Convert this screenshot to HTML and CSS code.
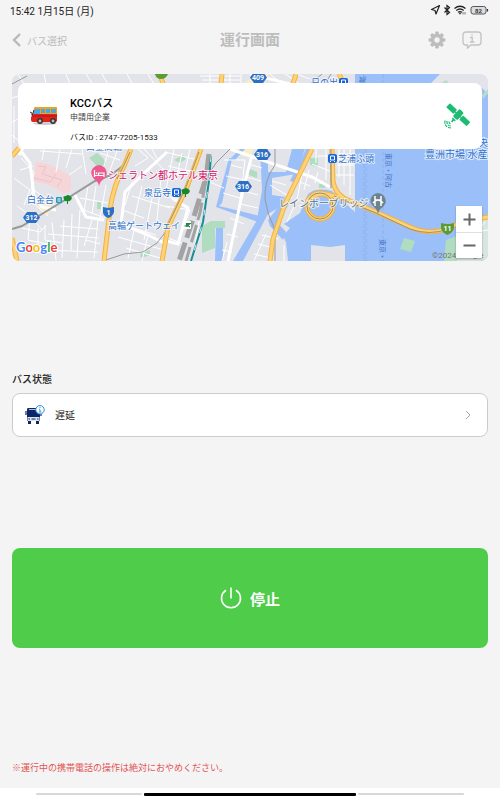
FILE: index.html
```html
<!DOCTYPE html>
<html lang="ja">
<head>
    <meta charset="UTF-8">
    <meta name="viewport" content="width=device-width, initial-scale=1">
    <title>運行画面</title>
    <link rel="stylesheet" href="styles.css">
</head>
<body>
    <div class="status-bar">
        <span>15:42 1月15日 (月)</span>
        <svg class="status-icons" width="60" height="12" viewBox="0 0 60 12">
            <path d="M9.500 1.500L1.500 5.500L5 6.500L6 10Z" fill="none" stroke="#222" stroke-width="1.200" stroke-linejoin="round"/>
            <path d="M14.500 3.500L19.500 8.500L17 10.500V1.500L19.500 3.500L14.500 8.500" fill="none" stroke="#222" stroke-width="1.200"/>
            <path d="M24.500 4.500Q30 0 35.500 4.500M26.300 6.500Q30 3.500 33.700 6.500M28 8.300Q30 6.800 32 8.300" fill="none" stroke="#222" stroke-width="1.300"/>
            <path d="M29 9L30 10.300L31 9ZM33 8V10.500M35 8V10.500" fill="#222" stroke="#444" stroke-width=".7"/>
            <rect x="41" y="2.500" width="15" height="7.500" rx="2.200" fill="#ddd" stroke="#555"/>
            <path d="M57.500 5V7.500" stroke="#333" stroke-width="1.200"/>
            <text x="48.500" y="8.700" class="battery-text">82</text>
        </svg>
    </div>

    <header class="header">
        <a href="#" class="back">
            <svg width="10" height="16" viewBox="0 0 10 16"><path d="M8 2L2 8L8 14" fill="none" stroke="#b9b9b9" stroke-width="2.400"/></svg>
            <span>バス選択</span>
        </a>
        <h1>運行画面</h1>
        <div class="actions">
            <button type="button" aria-label="設定">
                <svg width="18" height="18" viewBox="-9 -9 18 18">
                    <g fill="#bdbdbd">
                        <rect id="tooth" x="-1.800" y="-8.400" width="3.600" height="16.800" rx="1"/>
                        <use href="#tooth" transform="rotate(45)"/>
                        <use href="#tooth" transform="rotate(90)"/>
                        <use href="#tooth" transform="rotate(135)"/>
                        <circle r="6.300"/>
                    </g>
                    <circle r="2.700" fill="#f4f4f4"/>
                </svg>
            </button>
            <button type="button" aria-label="お知らせ">
                <svg width="20" height="18" viewBox="0 0 20 18" fill="none" stroke="#c2c2c2" stroke-width="1.300">
                    <path d="M4 1H16Q19 1 19 4V11Q19 14 16 14H9L5.500 17V14H4Q1 14 1 11V4Q1 1 4 1Z"/>
                    <path d="M8 6.500H10.200V11M7.800 11H12.500M9.300 3.800H10.800"/>
                </svg>
            </button>
        </div>
    </header>

    <main class="content">
        <section class="map">
            <svg class="map-canvas" viewBox="12 74 476 187" preserveAspectRatio="xMidYMid slice">
                <rect x="12" y="74" width="476" height="187" fill="#e2e4e9"/>

                <!-- parks -->
                <g fill="#b0dcc0">
                    <path d="M89 158L97 153L103 158L106 164L98 167Z"/>
                    <path d="M202 226L211 221H225V228H215V248L202 253Z"/>
                    <path d="M174 160L183 155L186 159L180 163Z"/>
                    <path d="M310 158H318V167L310 165Z"/>
                    <path d="M319 184H325V188H319ZM248 168L257 172V178L249 175Z"/>
                    <path d="M140 254L150 250V255L141 258ZM97 202H101V209H97Z"/>
                </g>
                <path d="M36 162L48 164L71 176V190L64 194L52 186L33 181Z" fill="#f6d5d8"/>
                <path d="M38 166L46 167L42 174L62 180L57 187M34 178L50 182L56 174" class="pink-lines"/>
                <path d="M36 199L52 205L48 215L40 210ZM238 149H254L250 158L238 154ZM244 83L258 74H270L262 83Z" fill="#f8edc9"/>

                <!-- water -->
                <g fill="#9bbff8">
                    <path d="M355 74H440L430 84L482 88L488 94V261H345V245L330 247L311 245V261H288L286 242L283 236L290 228L284 224L300 213L308 194Q316 187 332 191L355 212Z"/>
                    <path d="M229 158L232 159L222 203L219 206L260 216L258 222L216 207Z"/>
                    <path d="M260 149H268V172H286L292 149H305L296 174L272 178V195L285 197L280 207L268 214L243 261H233L257 220L262 190Z"/>
                    <path d="M216 228H223V261H215ZM268 220L287 196L290 203L277 222L286 232L283 240L270 226Z"/>
                    <path d="M306 149H313L297 183L290 181ZM230 159L240 149H245L234 161Z"/>
                </g>
                <path d="M404 238L415 241L411 252L400 249ZM446 240L457 236L462 261H444Z" fill="#b0dcc0"/>
                <path d="M457 222L488 216V261H457Z" fill="#d9e5df"/>
                <path d="M364 74V261M366 149V261M383 74V261" class="ferry"/>
                <path d="M440 84L446 80L450 84ZM482 95L488 89V93L483 99Z" fill="#b9dcc5"/>

                <!-- streets -->
                <g class="streets">
                    <path d="M12 98L18 96M14 106V143M12 122L18 119M12 135L20 142M18 74L24 84M44 74L46 84M66 74L70 84M86 74L92 83M102 74L108 84M127 74L132 83M148 74L154 84"/>
                    <path d="M40 151L82 154M44 149L42 160M60 149L56 172M72 149L66 168M82 149L86 174M82 166L69 175M21 158L34 172L31 190M20 170L33 166M14 178L30 190L24 205M34 190L55 205M34 182L30 200L48 216"/>
                    <path d="M17 206L31 216L42 230M30 216L28 240M22 228L40 232L46 226M38 228V244M45 225V240L62 243M52 222L56 260M64 220L62 258M72 214L71 250M80 210L77 258M92 220L84 246M98 220L94 258M28 240L48 244M48 234L99 238M42 250L98 252M60 226L98 229M86 240L100 244"/>
                    <path d="M108 152L104 166M118 149L110 170M100 153L120 160M96 186L92 214M88 186L84 212M106 185L100 218M80 198L108 203M84 210L105 218"/>
                    <path d="M138 149L148 158L135 166M144 149L164 170M152 149L158 160M132 182L125 205M142 186L134 220M152 198L144 240M161 178L157 220M122 210L144 218M132 196L170 208M124 225L156 235M118 237L164 250M134 230L128 258M148 235L142 261M126 248L160 258"/>
                    <path d="M165 152L198 160M168 166L194 172M174 149L166 190M182 153L176 180M190 149L184 176M166 196L182 200M166 206L190 210L177 245M168 238L184 244M200 216L194 250M205 180L224 188"/>
                    <path d="M224 160L245 160L240 200M226 176L245 180M231 165L242 168M223 193L240 198M248 164L262 168M246 177L261 181M244 191L258 195M240 204L258 208M230 218L244 224M227 234L238 237M222 250L232 252M227 242L222 261"/>
                    <path d="M272 181L286 185M270 185L292 198M302 174L297 200L287 222M309 170L304 190M300 182L310 186M316 149V163M326 149V180M318 156L330 156M312 164L332 172M318 172L315 183M262 235L278 239M258 244L274 248M254 254L270 258M266 234L254 261M274 238L270 261M284 245V261"/>
                    <path d="M200 76H240M202 80H240M210 74V84M220 74V84M230 74V84M241 74V84M270 74L282 84M285 74L300 84M296 74L310 79"/>
                    <path d="M339 149V177M344 149V185M350 149V195M337 165H354M336 175H354M457 235L488 230M460 256L485 222"/>
                </g>
                <g class="roads">
                    <path d="M18 147L30 163L34 196L42 207L56 210"/>
                    <path d="M75 195L86 217L104 220M167 152L140 177L125 192L121 224L148 235L166 244"/>
                    <path d="M252 155L243 190L228 261M230 149L262 160L312 177L330 187"/>
                    <path d="M172 198L188 208L178 244L163 240M250 74L290 84M24 146L19 155"/>
                </g>

                <!-- railways -->
                <path d="M12 229L22 226L60 203L95 181L111 175L124 165L131 149" class="rail"/>
                <path d="M106 260L124 254L143 252L157 243L170 226M230 149L216 163L206 178M275 149V165Q264 180 265 199Q267 214 275 230V261" class="rail thin"/>
                <path d="M209 154L206 178L195 213L179 261" class="tracks"/>
                <path d="M206 180L200 213L186 261" class="tracks narrow"/>
                <path d="M211 156L209 181L203 222L191 261" class="teal"/>
                <path d="M211 156L209 181L203 222L191 261" class="teal-dash"/>
                <path d="M12 84L27 76M310 84L322 74M325 84L331 74" class="rail thin"/>

                <!-- highways -->
                <g class="highway-edge">
                    <path id="hw1" d="M131 149L125 164Q113 186 110 210L104 261M201 149L187 187L168 227L162 261M160 74L163 84M222 74L221 84M296 74L293 84M339 74L344 84"/>
                    <path id="hw2" d="M12 156L19 148M12 238L17 261M312 149L285 204L273 239L270 261M332 149L333 182Q336 196 350 201L376 212L410 227Q430 236 448 228L464 221L488 217"/>
                    <path id="hw3" d="M307 201Q316 190 334 196L350 201"/>
                    <circle id="loop" cx="320" cy="206" r="13"/>
                </g>
                <g class="highway">
                    <use href="#hw1"/>
                    <use href="#hw2"/>
                    <use href="#hw3"/>
                    <use href="#loop"/>
                </g>
                <path d="M334 196L376 213L410 229Q430 236 448 229M199 152L186 187L167 227M331 149V188M130 152L124 165L117 179" class="lane"/>
                <circle cx="320" cy="206" r="13" class="lane"/>

                <!-- road numbers -->
                <g class="shield">
                    <path id="badge" d="M27 212H36L40 217.500L36 223H27L23 217.500Z"/>
                    <use href="#badge" x="212" y="-31"/>
                    <use href="#badge" x="231" y="-63"/>
                    <use href="#badge" x="227" y="-140"/>
                    <path d="M103 207L108 208L114 207V212Q113 216 108.500 218Q103 216 103 212Z"/>
                    <text x="31.500" y="220">312</text>
                    <text x="243" y="189">316</text>
                    <text x="262" y="157">316</text>
                    <text x="258" y="80">409</text>
                    <text x="108.500" y="215">1</text>
                </g>
                <path d="M441 223Q448 225 454 223V228Q453 233 447.500 235Q442 233 441 228Z" fill="#5b9b35"/>
                <text x="447.500" y="231" class="route">11</text>
                <path d="M155 74H168Q166 79 161 79Q156 79 155 74Z" fill="#5b9b35"/>

                <!-- pins -->
                <path d="M99 186Q98 181 94 179Q89 173 93 168Q99 162 105 168Q109 174 104 179Q100 181 99 186Z" fill="#ed5a8e"/>
                <path d="M94.500 170V177M94.500 175.500H104V177M104 175V173H98.500V175M96.500 172.500V174" stroke="#fff" fill="none" stroke-width="1.200"/>
                <path d="M378 214Q377 209 374 207Q368 202 372 196Q378 190 384 196Q388 202 383 207Q379 209 378 214Z" fill="#6d838e"/>
                <path d="M375 196V206M381 196V206M373 203Q378 197 383 203M375 200H381" stroke="#fff" fill="none" stroke-width="1.500"/>
                <g id="tree" fill="#16892c">
                    <path d="M64 199Q62 196 66 196Q68 194 70 196Q73 197 71 200Q69 202 67 201Q64 202 64 199Z"/>
                    <path d="M67 200H68V204H67Z"/>
                </g>
                <use href="#tree" x="118" y="-7"/>
                <g id="station">
                    <rect x="172" y="188" width="9" height="9" rx="2" fill="#1765d8"/>
                    <path d="M174.500 190H178.500V194H174.500ZM174 196L175 195M179 196L178 195" fill="#1765d8" stroke="#fff"/>
                </g>
                <use href="#station" x="156" y="-34"/>
                <use href="#station" x="167" y="-110"/>
                <rect x="56" y="197" width="6" height="6" rx="1" fill="#249bb0"/>
                <path d="M57 199H61M57 201H61M59 198V202" stroke="#fff" stroke-width=".6"/>
                <rect x="183" y="221" width="8" height="8" rx="1" fill="#fff"/>
                <path d="M186.500 223V226H184.500M187 227V223.500H190L187.500 225.500L190 227" fill="none" stroke="#168548" stroke-width="1.200"/>

                <!-- place names -->
                <g class="place">
                    <text x="27" y="203">白金台</text>
                    <text x="144" y="196">泉岳寺</text>
                    <text x="108" y="229">高輪ゲートウェイ</text>
                    <text x="338" y="162">芝浦ふ頭</text>
                    <text x="311" y="86">日の出</text>
                    <text x="86" y="150">白金高輪</text>
                    <text x="479" y="146">央</text>
                    <text x="425" y="158" class="big">豊洲市場 水産</text>
                    <text x="279" y="207" class="big slate">レインボーブリッジ</text>
                    <text x="108" y="179" class="big hotel">シェラトン都ホテル東京</text>
                </g>
                <g class="sea">
                    <text transform="translate(386 153) rotate(90)">東京・阿古</text>
                    <text transform="translate(380 239) rotate(90)">東京・</text>
                    <text transform="translate(360 76) rotate(90)">海</text>
                </g>
                <text x="432" y="258" class="copyright">©2024 Google</text>
                <text x="16" y="252" class="google"><tspan fill="#4285f4">G</tspan><tspan fill="#ea4335">o</tspan><tspan fill="#fbbc05">o</tspan><tspan fill="#4285f4">g</tspan><tspan fill="#34a853">l</tspan><tspan fill="#ea4335">e</tspan></text>
            </svg>

            <div class="bus-card">
                <svg class="bus-icon" width="28" height="20" viewBox="0 0 28 20">
                    <ellipse cx="15" cy="17.500" rx="12" ry="1.500" fill="#ccc"/>
                    <path d="M4 3Q4 1 7 1H25Q27 1 27 3V15Q27 16 25 16H3Q1 16 1 14V11L3 9Z" fill="#e2231a"/>
                    <path d="M4 3Q4 1 7 1H25Q27 1 27 3V8H3Z" fill="#f5a21b"/>
                    <path d="M5 3H10V8H3.500ZM11 3H15V7H11ZM16 3H20V7H16ZM21 3H26V7H21Z" fill="#45a9e8"/>
                    <path d="M2 10H27" stroke="#b31217"/>
                    <path d="M0 6L2 7V9M4 4L2 10" stroke="#333" fill="none"/>
                    <g fill="#bbb" stroke="#333" stroke-width="1.500"><circle cx="10" cy="15" r="2.200"/><circle cx="23" cy="15" r="2.200"/></g>
                </svg>
                <div class="bus-info">
                    <h2>KCCバス</h2>
                    <p class="company">申請用企業</p>
                    <p class="bus-id">バスID : 2747-7205-1533</p>
                </div>
                <svg class="gps" width="26" height="26" viewBox="0 0 26 26">
                    <g transform="rotate(43 13 13)" fill="#1dbc73">
                        <rect x="-1" y="8.500" width="10" height="5.500" rx="1"/>
                        <rect x="17" y="8.500" width="10" height="5.500" rx="1"/>
                        <rect x="10" y="6" width="6" height="10" rx="1.500"/>
                        <path d="M9 10.500H17V12H9ZM11 17H15V18.500H11ZM12.200 18H13.800V21H12.200Z"/>
                    </g>
                    <path d="M5 18.500Q5 21 7.500 21M3 18Q2.500 23 7.500 23M1 17.500Q0 25 8 25" fill="none" stroke="#1dbc73" stroke-width="1.200" stroke-dasharray="3 1"/>
                </svg>
            </div>

            <div class="zoom">
                <button type="button" aria-label="拡大"><svg width="13" height="13" viewBox="0 0 13 13"><path d="M0.500 6.500H12.500M6.500 0.500V12.500"/></svg></button>
                <button type="button" aria-label="縮小"><svg width="13" height="13" viewBox="0 0 13 13"><path d="M0.500 6.500H12.500"/></svg></button>
            </div>
        </section>

        <section class="bus-state">
            <h2 id="state-label">バス状態</h2>
            <button type="button" class="state-row" aria-describedby="state-label">
                <svg width="20" height="20" viewBox="0 0 20 20">
                    <path d="M2 4Q2 3 4 3H13Q15 3 15 5V16H2Z" fill="#0d2467"/>
                    <path d="M1 6V10M16 9V11" stroke="#0d2467" stroke-width="1.200"/>
                    <path d="M3 16H6V19H3ZM11 16H14V19H11Z" fill="#0d2467"/>
                    <path d="M4 4.500H11" stroke="#b7bed4"/>
                    <path d="M2.500 12H14.500V16H2.500Z" fill="#dfe3ee"/>
                    <path d="M3.500 14H5M12 14H13.500M6.500 14H10.500" stroke="#0d2467"/>
                    <circle cx="15" cy="4.800" r="4.200" fill="#fff" stroke="#2b8de0"/>
                    <path d="M14 4.300H15V7M13.700 7H16.500M14.500 2.500H15.500" stroke="#2b8de0" fill="none" stroke-width=".9"/>
                </svg>
                <span class="state-name">遅延</span>
                <svg width="6" height="10" viewBox="0 0 6 10"><path d="M1 1L5 5L1 9" fill="none" stroke="#aaa"/></svg>
            </button>
        </section>

        <button type="button" class="stop">
            <svg width="22" height="22" viewBox="0 0 22 22"><path d="M6 3.200A9.500 9.500 0 1 0 16 3.200M11 0.500V11.500" fill="none" stroke="#fff" stroke-width="1.600"/></svg>
            <span>停止</span>
        </button>

        <p class="notice">※運行中の携帯電話の操作は絶対におやめください。</p>
    </main>

    <div class="nav-bar">
        <span></span>
        <span class="active"></span>
        <span></span>
    </div>
</body>
</html>
```
FILE: styles.css
```css
* {
    box-sizing: border-box;
}
body {
    margin: 0;
    min-height: 100vh;
    display: flex;
    flex-direction: column;
    background-color: #f4f4f4;
    color: #222;
    font-family: Roboto, "Noto Sans CJK JP", sans-serif;
    font-size: 10px;
}
h1, h2, p {
    margin: 0;
}
svg {
    display: block;
    flex-shrink: 0;
}
button {
    font-family: inherit;
    border: none;
    padding: 0;
    background: none;
    color: inherit;
    cursor: pointer;
}

/* top bars */
.status-bar {
    height: 20px;
    padding: 0 10px;
    display: flex;
    justify-content: space-between;
    align-items: center;
}
.battery-text {
    font-size: 6px;
    font-weight: bold;
    fill: #333;
    text-anchor: middle;
}
.header {
    height: 40px;
    padding: 0 12px;
    display: grid;
    grid-template-columns: 1fr auto 1fr;
    align-items: center;
}
.back {
    display: flex;
    align-items: center;
    gap: 5px;
    color: #b9b9b9;
    text-decoration: none;
}
.header h1 {
    font-size: 15px;
    line-height: 20px;
    color: #bdbdbd;
}
.actions {
    display: flex;
    justify-content: flex-end;
    gap: 16px;
    padding-right: 6px;
}

.content {
    flex: 1;
    padding: 14px 12px 12px;
    display: flex;
    flex-direction: column;
    justify-content: space-between;
}

/* map */
.map {
    position: relative;
    height: 187px;
    border-radius: 8px;
    overflow: hidden;
}
.map-canvas {
    width: 100%;
    height: 100%;
}
.streets, .roads {
    fill: none;
    stroke: #fff;
    stroke-width: 1;
}
.roads {
    stroke-width: 3;
}
.pink-lines {
    fill: none;
    stroke: #efc2c7;
    stroke-width: 1;
}
.ferry {
    stroke: #8bb1f0;
    stroke-dasharray: 4 2;
}
.rail {
    fill: none;
    stroke: #999;
    stroke-width: 2;
}
.thin {
    stroke-width: 1;
}
.tracks {
    fill: none;
    stroke: #a3a3a3;
    stroke-width: 5;
    stroke-dasharray: 18 5;
}
.narrow {
    stroke-width: 3;
}
.teal {
    fill: none;
    stroke: #168e96;
    stroke-width: 2;
}
.teal-dash {
    fill: none;
    stroke: #cfe8ea;
    stroke-width: 1;
    stroke-dasharray: 6 12;
}
.highway-edge {
    fill: none;
    stroke: #f4b23c;
    stroke-width: 5;
}
.highway {
    fill: none;
    stroke: #fdd278;
    stroke-width: 3;
}
.lane {
    fill: none;
    stroke: #9a8f74;
}
.shield {
    fill: #2c6fc4;
}
.shield text, .route {
    fill: #fff;
    font-size: 7px;
    font-weight: bold;
    text-anchor: middle;
}
.place, .sea {
    font-size: 9px;
    fill: #2f72cc;
    stroke: rgba(255, 255, 255, 0.7);
    stroke-width: 2px;
    paint-order: stroke;
}
.place .big {
    font-size: 10px;
}
.place .slate {
    fill: #5f7884;
}
.place .hotel {
    fill: #d3186b;
}
.sea {
    font-size: 7px;
    fill: #4475c4;
    stroke: none;
}
.copyright {
    font-size: 8px;
    fill: #777;
}
.google {
    font-family: Lato, sans-serif;
    font-size: 13px;
    font-weight: bold;
    stroke: #fff;
    stroke-width: 2px;
    paint-order: stroke;
}
.bus-card {
    position: absolute;
    top: 9px;
    left: 6px;
    right: 6px;
    height: 66px;
    padding: 0 12px;
    display: flex;
    align-items: center;
    background-color: #fff;
    border-radius: 8px;
}
.bus-info {
    flex: 1;
    padding-top: 8px;
    margin-left: 12px;
}
.bus-info h2 {
    font-size: 11px;
    line-height: 16px;
    font-weight: 500;
    color: #000;
}
.company, .bus-id {
    font-size: 8px;
    line-height: 12px;
}
.company {
    color: #444;
}
.bus-id {
    margin-top: 8px;
}
.zoom {
    position: absolute;
    right: 6px;
    bottom: 3px;
    width: 26px;
    background-color: #fff;
    box-shadow: 0 1px 2px rgba(0, 0, 0, 0.3);
}
.zoom button {
    width: 100%;
    height: 26px;
    display: flex;
    align-items: center;
    justify-content: center;
}
.zoom button + button {
    border-top: 1px solid #e0e0e0;
}
.zoom path {
    stroke: #666;
    stroke-width: 2;
}

/* bus state */
.bus-state h2 {
    font-size: 10px;
    line-height: 14px;
    font-weight: 500;
    margin-bottom: 6px;
}
.state-row {
    width: 100%;
    height: 44px;
    padding: 0 16px 0 12px;
    display: flex;
    align-items: center;
    gap: 10px;
    background-color: #fff;
    border: 1px solid #ccc;
    border-radius: 8px;
    font-size: 10px;
    text-align: left;
}
.state-name {
    flex: 1;
}

.stop {
    width: 100%;
    height: 100px;
    display: flex;
    align-items: center;
    justify-content: center;
    gap: 8px;
    background-color: #4fcd4a;
    border-radius: 8px;
    color: #fff;
    font-size: 15px;
    font-weight: bold;
}
.notice {
    font-size: 9px;
    line-height: 16px;
    color: #e25555;
}

/* gesture bar */
.nav-bar {
    height: 12px;
    padding: 0 36px;
    display: flex;
    align-items: center;
    gap: 2px;
    background-color: #fff;
}
.nav-bar span {
    flex: 1;
    height: 2px;
    border-radius: 1px;
    background-color: #d8d8d8;
}
.nav-bar .active {
    flex: 2;
    height: 3px;
    background-color: #000;
}
```
